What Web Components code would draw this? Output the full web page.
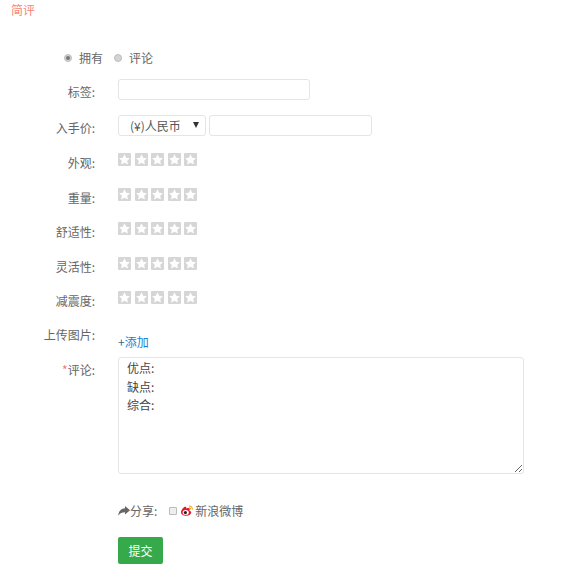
<!DOCTYPE html>
<html lang="zh"><head><meta charset="utf-8"><style>
html,body{margin:0;padding:0;background:#fff}
body{font:12px/17px "Noto Sans CJK SC","Liberation Sans",sans-serif;color:#666}
</style></head><body>
<review-form></review-form>
<script>
const def=(n,html)=>customElements.define(n,class extends HTMLElement{connectedCallback(){if(this.shadowRoot)return;const r=this.attachShadow({mode:'open'});r.innerHTML=html;}});
def('star-rating',`<style>:host{display:flex;gap:3.5px}svg{width:13px;height:13px;display:block}</style>`+
 Array(5).fill(`<svg viewBox="0 0 13 13"><rect width="13" height="13" rx="1" fill="#d6d6d6"/><path d="M6.5 1.200l1.700 3.500 3.700.5-2.700 2.600.7 3.700-3.400-1.800-3.400 1.800.7-3.700L1.100 5.200l3.700-.5z" fill="#fff"/></svg>`).join(''));
def('form-row',`<style>:host{display:grid;grid-template-columns:95px 1fr;column-gap:23px;align-items:start}
.l{text-align:right;white-space:nowrap}</style><div class="l" part="l"><slot name="label"></slot></div><div><slot></slot></div>`);
def('text-box',`<style>:host{display:block}input{display:block;box-sizing:border-box;width:100%;height:21px;border:1px solid #e5e5e5;border-radius:3px;background:#fff;margin:0;padding:0 6px;outline:0}</style><input type="text">`);
def('select-box',`<style>:host{display:block;position:relative;width:88px;height:21px;flex:none}
select{appearance:none;-webkit-appearance:none;display:block;width:100%;height:21px;box-sizing:border-box;border:1px solid #e5e5e5;border-radius:3px;background:#fff;color:#555;font:12px "Noto Sans CJK SC",sans-serif;padding:0 0 0 11px;margin:0;outline:0}
i{position:absolute;left:75px;top:7px;width:0;height:0;border-style:solid;border-width:6px 3px 0;border-color:#333 transparent transparent;pointer-events:none}</style><select><option>(¥)人民币</option></select><i></i>`);
def('review-form',`<style>
:host{display:block;width:577px;height:584px;box-sizing:border-box;padding:1px 0 0 0;color:#666}
h2{font:12px/17px "Noto Sans CJK SC",sans-serif;color:#fb8578;margin:0 0 0 11px}
form{display:block;padding-top:31px}
.radios{display:flex;align-items:center;height:17px;margin-left:64px}
.radios span{margin:0 11px 0 7px}
.r{width:8px;height:8px;border-radius:50%;background:#d4d4d4;border:1px solid #bdbdbd;box-sizing:border-box;flex:none;display:flex;align-items:center;justify-content:center}
.r.on i{width:4px;height:4px;border-radius:50%;background:#777;display:block}
.t1{margin-top:13px}.lb{padding-top:4px;display:block}
.pr{margin-top:15px}
.pair{display:flex;gap:3px}
.p2{width:163px;flex:none}
.sr{height:34.5px}
.sr .lb{padding-top:2px}
.sr star-rating{margin-top:1px}
textarea{display:block;box-sizing:border-box;width:406px;height:117px;border:1px solid #e5e5e5;border-radius:3px;padding:1px 8px;margin:0;font:12px/18.5px "Noto Sans CJK SC",sans-serif;color:#444;background:#fff;outline:0;resize:vertical}
a{color:#1b7fd1;text-decoration:none}
a b{font-weight:400;color:#2c6e8f}
.share{display:flex;align-items:center;height:17px;margin:28px 0 0 118px;white-space:nowrap}
.cb{width:8px;height:8px;border:1px solid #bbb;background:#eee;border-radius:1px;box-sizing:border-box;margin:0 4px 0 12px}
button{display:block;margin:18px 0 0 118px;width:45px;height:27px;border:0;border-radius:2px;background:#36a94a;color:#fff;font:12px "Noto Sans CJK SC",sans-serif;padding:0}
.red{color:#f77a6a}
</style>
<h2>简评</h2>
<form onsubmit="return false">
<div class="radios"><div class="r on"><i></i></div><span>拥有</span><div class="r"></div><span>评论</span></div>
<form-row class="t1"><span slot="label" class="lb">标签:</span><text-box style="width:192px"></text-box></form-row>
<form-row class="pr"><span slot="label" class="lb">入手价:</span><div class="pair"><select-box></select-box><text-box class="p2"></text-box></div></form-row>
<div style="height:16px"></div>
<form-row class="sr"><span slot="label" class="lb">外观:</span><star-rating></star-rating></form-row>
<form-row class="sr"><span slot="label" class="lb">重量:</span><star-rating></star-rating></form-row>
<form-row class="sr"><span slot="label" class="lb">舒适性:</span><star-rating></star-rating></form-row>
<form-row class="sr"><span slot="label" class="lb">灵活性:</span><star-rating></star-rating></form-row>
<form-row class="sr"><span slot="label" class="lb">减震度:</span><star-rating></star-rating></form-row>
<form-row style="height:33.5px;margin-top:-1px"><span slot="label" class="lb" style="padding-top:2px">上传图片:</span><div style="padding-top:9px"><a href="#"><b>+</b>添加</a></div></form-row>
<form-row><span slot="label" class="lb"><span class="red">*</span>评论:</span><textarea>优点:
缺点:
综合:</textarea></form-row>
<div class="share"><svg width="12" height="10" viewBox="0 0 12 10"><path d="M7 0l5 4.200-5 4.200V6.200C4 6.200 2 7 .2 9.800.4 5.500 3 2.400 7 2.200z" fill="#666"/></svg>分享:<div class="cb"></div><svg width="12" height="11" viewBox="0 0 12 11" style="margin-right:2px"><path d="M8.900 6.100c-.4-.1-.6-.2-.4-.6.4-.9.4-1.500 0-2-.8-.9-2.900-.1-2.900-.1-.4.1-.3-.1-.3-.6 0-.9-.9-1.500-2.300-.5C1.500 3.300 0 5.400 0 7.200 0 9.400 2.400 10.800 4.900 10.800c3.200 0 5.300-1.900 5.300-3.400 0-.7-.6-1.100-1.300-1.300z" fill="#e6162d"/><ellipse cx="4.700" cy="7.500" rx="3.100" ry="2.500" fill="#fff"/><circle cx="4.400" cy="7.600" r="1.600" fill="#222"/><path d="M7.800 1c2-.4 4 1.400 3.500 3.700M8 2.900c.9-.2 1.700.6 1.500 1.500" fill="none" stroke="#f5a623" stroke-width="1.100"/></svg>新浪微博</div>
<button type="button">提交</button>
</form>`);
</script></body></html>
